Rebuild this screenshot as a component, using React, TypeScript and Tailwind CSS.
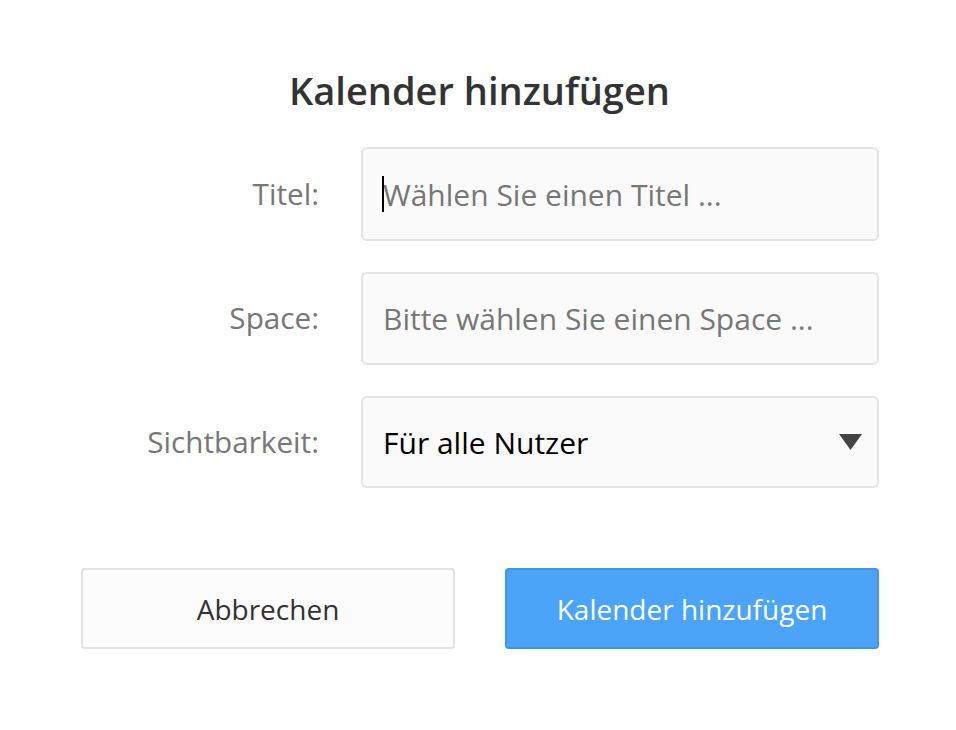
import { useState } from "react";

const FONT = { fontFamily: '"Open Sans", "Noto Sans", sans-serif' };

export default function App() {
  const [titel, setTitel] = useState("");
  const [space, setSpace] = useState("");
  const [sicht, setSicht] = useState("alle");

  return (
    <div style={FONT} className="min-h-[730px] w-full bg-white text-[#333]">
      <div className="pt-[65px] pl-[79px] pr-[76px] w-[956px]">
        <h1 className="text-center text-[38px] leading-[50px] font-semibold text-[#333]">
          Kalender hinzufügen
        </h1>

        <div className="mt-[32px] flex flex-col gap-[31px]">
          <div className="flex items-center">
            <label className="w-[240px] text-right text-[29.7px] text-[#777]">Titel:</label>
            <div className="relative ml-[42px] w-[518px]">
              <input
                value={titel}
                onChange={e => setTitel(e.target.value)}
                placeholder="Wählen Sie einen Titel ..."
                className="h-[94px] w-full rounded-[6px] border-2 border-[#e3e3e3] bg-[#fafafa] pl-[20px] pr-[20px] text-[30px] text-black placeholder:text-[#777] outline-none"
              />
              {titel === "" && (
                <span className="absolute left-[21px] top-[29px] h-[36px] w-[2px] bg-black" />
              )}
            </div>
          </div>

          <div className="flex items-center">
            <label className="w-[240px] text-right text-[29.7px] text-[#777]">Space:</label>
            <input
              value={space}
              onChange={e => setSpace(e.target.value)}
              placeholder="Bitte wählen Sie einen Space ..."
              className="ml-[42px] h-[93px] w-[518px] rounded-[6px] border-2 border-[#e3e3e3] bg-[#fafafa] px-[20px] text-[30px] text-black placeholder:text-[#777] outline-none"
            />
          </div>

          <div className="flex items-center">
            <label className="w-[240px] text-right text-[29.7px] text-[#777]">Sichtbarkeit:</label>
            <div className="relative ml-[42px] w-[518px]">
              <select
                value={sicht}
                onChange={e => setSicht(e.target.value)}
                className="h-[92px] w-full appearance-none rounded-[6px] border-2 border-[#e3e3e3] bg-[#fafafa] px-[20px] text-[30px] text-black outline-none"
              >
                <option value="alle">Für alle Nutzer</option>
                <option value="ich">Nur für mich</option>
              </select>
              <svg
                className="pointer-events-none absolute right-[17px] top-[38px]"
                width="23"
                height="16"
                viewBox="0 0 23 16"
              >
                <path d="M0 0 H23 L11.5 16 Z" fill="#444" />
              </svg>
            </div>
          </div>
        </div>

        <div className="mt-[80px] flex gap-[50px] pl-[2px]">
          <button className="h-[81px] w-[374px] shrink-0 rounded-[4px] border-2 border-[#e3e3e3] bg-[#fcfcfc] text-[28px] text-[#333]">
            Abbrechen
          </button>
          <button className="h-[81px] w-[374px] shrink-0 rounded-[4px] border-2 border-[#4295e6] bg-[#4ba4f7] text-[28px] text-white">
            Kalender hinzufügen
          </button>
        </div>
      </div>
    </div>
  );
}
